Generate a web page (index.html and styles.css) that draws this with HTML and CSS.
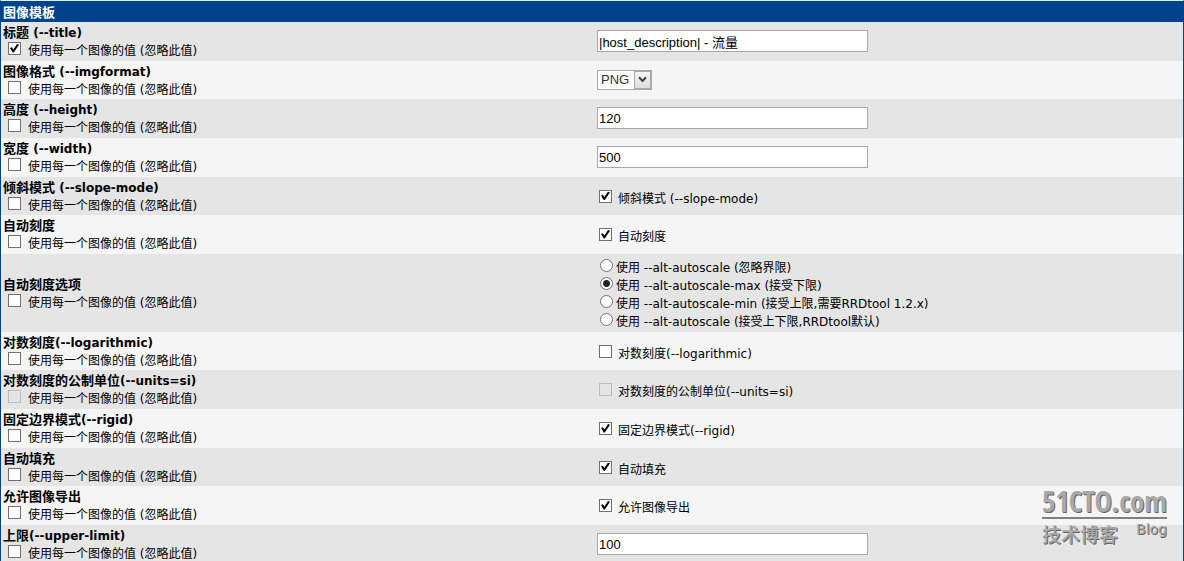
FILE: index.html
```html
<!DOCTYPE html>
<html lang="zh-CN">
<head>
<meta charset="utf-8">
<title>图像模板</title>
<link rel="stylesheet" href="styles.css">
</head>
<body>
<form class="page">
<table class="form-table">
<thead><tr><th class="form-head" colspan="2">图像模板</th></tr></thead>
<tbody>
<tr class="row"><td class="cell"><label class="name" for="title"><span class="cn">标题</span> (--title)</label><label class="override"><input class="check" type="checkbox" checked><span class="text">使用每一个图像的值 (忽略此值)</span></label></td><td class="cell"><input class="field" id="title" type="text" value="|host_description| - 流量"></td></tr>
<tr class="row"><td class="cell"><label class="name" for="format"><span class="cn">图像格式</span> (--imgformat)</label><label class="override"><input class="check" type="checkbox"><span class="text">使用每一个图像的值 (忽略此值)</span></label></td><td class="cell"><span class="picker"><select class="select" id="format"><option>PNG</option><option>GIF</option></select><span class="arrow"><svg width="9" height="7" viewBox="0 0 9 7"><path d="M1 1.2 4.5 5 8 1.2" fill="none" stroke="#444" stroke-width="2"/></svg></span></span></td></tr>
<tr class="row"><td class="cell"><label class="name" for="height"><span class="cn">高度</span> (--height)</label><label class="override"><input class="check" type="checkbox"><span class="text">使用每一个图像的值 (忽略此值)</span></label></td><td class="cell"><input class="field" id="height" type="text" value="120"></td></tr>
<tr class="row"><td class="cell"><label class="name" for="width"><span class="cn">宽度</span> (--width)</label><label class="override"><input class="check" type="checkbox"><span class="text">使用每一个图像的值 (忽略此值)</span></label></td><td class="cell"><input class="field" id="width" type="text" value="500"></td></tr>
<tr class="row"><td class="cell"><label class="name" for="slope"><span class="cn">倾斜模式</span> (--slope-mode)</label><label class="override"><input class="check" type="checkbox"><span class="text">使用每一个图像的值 (忽略此值)</span></label></td><td class="cell"><label class="option"><input class="check" id="slope" type="checkbox" checked><span class="text">倾斜模式 (--slope-mode)</span></label></td></tr>
<tr class="row"><td class="cell"><label class="name" for="auto"><span class="cn">自动刻度</span></label><label class="override"><input class="check" type="checkbox"><span class="text">使用每一个图像的值 (忽略此值)</span></label></td><td class="cell"><label class="option"><input class="check" id="auto" type="checkbox" checked><span class="text">自动刻度</span></label></td></tr>
<tr class="row row-tall"><td class="cell"><div class="name"><span class="cn">自动刻度选项</span></div><label class="override"><input class="check" type="checkbox"><span class="text">使用每一个图像的值 (忽略此值)</span></label></td><td class="cell"><div class="choices">
<label class="choice"><input class="radio" type="radio" name="scale"><span class="text">使用 --alt-autoscale (忽略界限)</span></label>
<label class="choice"><input class="radio" type="radio" name="scale" checked><span class="text">使用 --alt-autoscale-max (接受下限)</span></label>
<label class="choice"><input class="radio" type="radio" name="scale"><span class="text">使用 --alt-autoscale-min (接受上限,需要RRDtool 1.2.x)</span></label>
<label class="choice"><input class="radio" type="radio" name="scale"><span class="text">使用 --alt-autoscale (接受上下限,RRDtool默认)</span></label></div></td></tr>
<tr class="row"><td class="cell"><label class="name" for="log"><span class="cn">对数刻度</span>(--logarithmic)</label><label class="override"><input class="check" type="checkbox"><span class="text">使用每一个图像的值 (忽略此值)</span></label></td><td class="cell"><label class="option"><input class="check" id="log" type="checkbox"><span class="text">对数刻度(--logarithmic)</span></label></td></tr>
<tr class="row"><td class="cell"><label class="name" for="units"><span class="cn">对数刻度的公制单位</span>(--units=si)</label><label class="override"><input class="check" type="checkbox" disabled><span class="text">使用每一个图像的值 (忽略此值)</span></label></td><td class="cell"><label class="option"><input class="check" id="units" type="checkbox" disabled><span class="text">对数刻度的公制单位(--units=si)</span></label></td></tr>
<tr class="row"><td class="cell"><label class="name" for="rigid"><span class="cn">固定边界模式</span>(--rigid)</label><label class="override"><input class="check" type="checkbox"><span class="text">使用每一个图像的值 (忽略此值)</span></label></td><td class="cell"><label class="option"><input class="check" id="rigid" type="checkbox" checked><span class="text">固定边界模式(--rigid)</span></label></td></tr>
<tr class="row"><td class="cell"><label class="name" for="padding"><span class="cn">自动填充</span></label><label class="override"><input class="check" type="checkbox"><span class="text">使用每一个图像的值 (忽略此值)</span></label></td><td class="cell"><label class="option"><input class="check" id="padding" type="checkbox" checked><span class="text">自动填充</span></label></td></tr>
<tr class="row"><td class="cell"><label class="name" for="export"><span class="cn">允许图像导出</span></label><label class="override"><input class="check" type="checkbox"><span class="text">使用每一个图像的值 (忽略此值)</span></label></td><td class="cell"><label class="option"><input class="check" id="export" type="checkbox" checked><span class="text">允许图像导出</span></label></td></tr>
<tr class="row"><td class="cell"><label class="name" for="upper"><span class="cn">上限</span>(--upper-limit)</label><label class="override"><input class="check" type="checkbox"><span class="text">使用每一个图像的值 (忽略此值)</span></label></td><td class="cell"><input class="field" id="upper" type="text" value="100"></td></tr>
</tbody>
</table>
<div class="watermark">
<div class="brand">51CTO.com</div>
<div class="brand-sub"><span class="brand-cn">技术博客</span><span class="brand-blog">Blog</span></div>
</div>
</form>
</body>
</html>
```
FILE: styles.css
```css
* { box-sizing: border-box; }
body {
  margin: 0;
  color: #000;
  background: #f5f5f5;
  font: 12px/18px "DejaVu Sans", "Noto Sans CJK SC", sans-serif;
}
.page {
  position: relative;
  height: 100vh;
  overflow: hidden;
  border-top: 1px solid #d9eef5;
  border-left: 1px solid #00438c;
  border-right: 1px solid #00438c;
}
.form-table {
  width: 100%;
  table-layout: fixed;
  border-collapse: collapse;
}
.form-head {
  height: 21px;
  padding: 3px 2px 0;
  background: #00438c;
  color: #fff;
  font-size: 13px;
  line-height: 18px;
  text-align: left;
}
.row { height: 39px; background: #f5f5f5; }
.row:nth-child(3n+2) { height: 38px; }
.row:nth-child(odd) { background: #e5e5e5; }
.row.row-tall { height: 78px; }
.cell { padding: 1px 4px 0 2px; vertical-align: middle; }
.cell + .cell { padding: 0 4px 1px 5px; }
.name { display: block; font-weight: bold; }
.cn { font-size: 13px; }
.override, .option, .choice { display: flex; align-items: flex-start; }
.override { padding-left: 5px; gap: 7px; }
.option { padding: 6px 0 0 2px; gap: 6px; }
.choices { padding-top: 5px; }
.choice { padding-left: 3px; gap: 3px; }
.text { line-height: 18px; }
.check, .radio {
  appearance: none;
  flex: none;
  width: 13px;
  height: 13px;
  margin: 0;
  border: 1px solid #707070;
  background: #fff;
}
.radio { border-radius: 50%; }
.check:checked { display: grid; place-items: center; }
.check:checked::before {
  content: "";
  width: 9px;
  height: 9px;
  background: #000;
  clip-path: polygon(0 45%, 20% 35%, 38% 60%, 78% 0, 100% 8%, 42% 95%, 30% 95%);
}
.check:disabled { border-color: #bbb; background: #e4e4e4; }
.radio:checked { background: radial-gradient(circle, #222 0 3px, #fff 4px); }
.field {
  display: block;
  width: 271px;
  max-width: 100%;
  height: 22px;
  padding: 0 1px;
  border: 1px solid #a9a9a9;
  background: #fff;
  color: #000;
  font: 13px "Liberation Sans", "Noto Sans CJK SC", sans-serif;
}
.picker {
  display: flex;
  width: 55px;
  height: 20px;
  border: 1px solid #a9a9a9;
  background: #fff;
  position: relative;
}
.select {
  appearance: none;
  width: 100%;
  padding: 0 3px;
  border: 0;
  background: transparent;
  color: #333;
  font: 13px "Liberation Sans", sans-serif;
}
.arrow {
  position: absolute;
  top: 0;
  right: 0;
  bottom: 0;
  display: grid;
  place-items: center;
  width: 17px;
  border: 1px solid #a9a9a9;
  background: linear-gradient(#f5f5f5, #ddd);
  pointer-events: none;
}
.watermark {
  position: absolute;
  right: 16px;
  bottom: 12px;
  width: 125px;
  color: #a9a9a9;
  text-shadow: 1px 1px 0 #666;
  pointer-events: none;
}
.brand {
  border-bottom: 2px solid #808080;
  font: bold 29px/32px "Open Sans Condensed", "Liberation Sans Narrow", "DejaVu Sans Condensed", sans-serif;
}
.brand-sub { display: flex; justify-content: space-between; }
.brand-cn { font: 500 19px/30px "Noto Sans CJK SC", sans-serif; }
.brand-blog { font: 14px/20px "DejaVu Sans", sans-serif; }
```
